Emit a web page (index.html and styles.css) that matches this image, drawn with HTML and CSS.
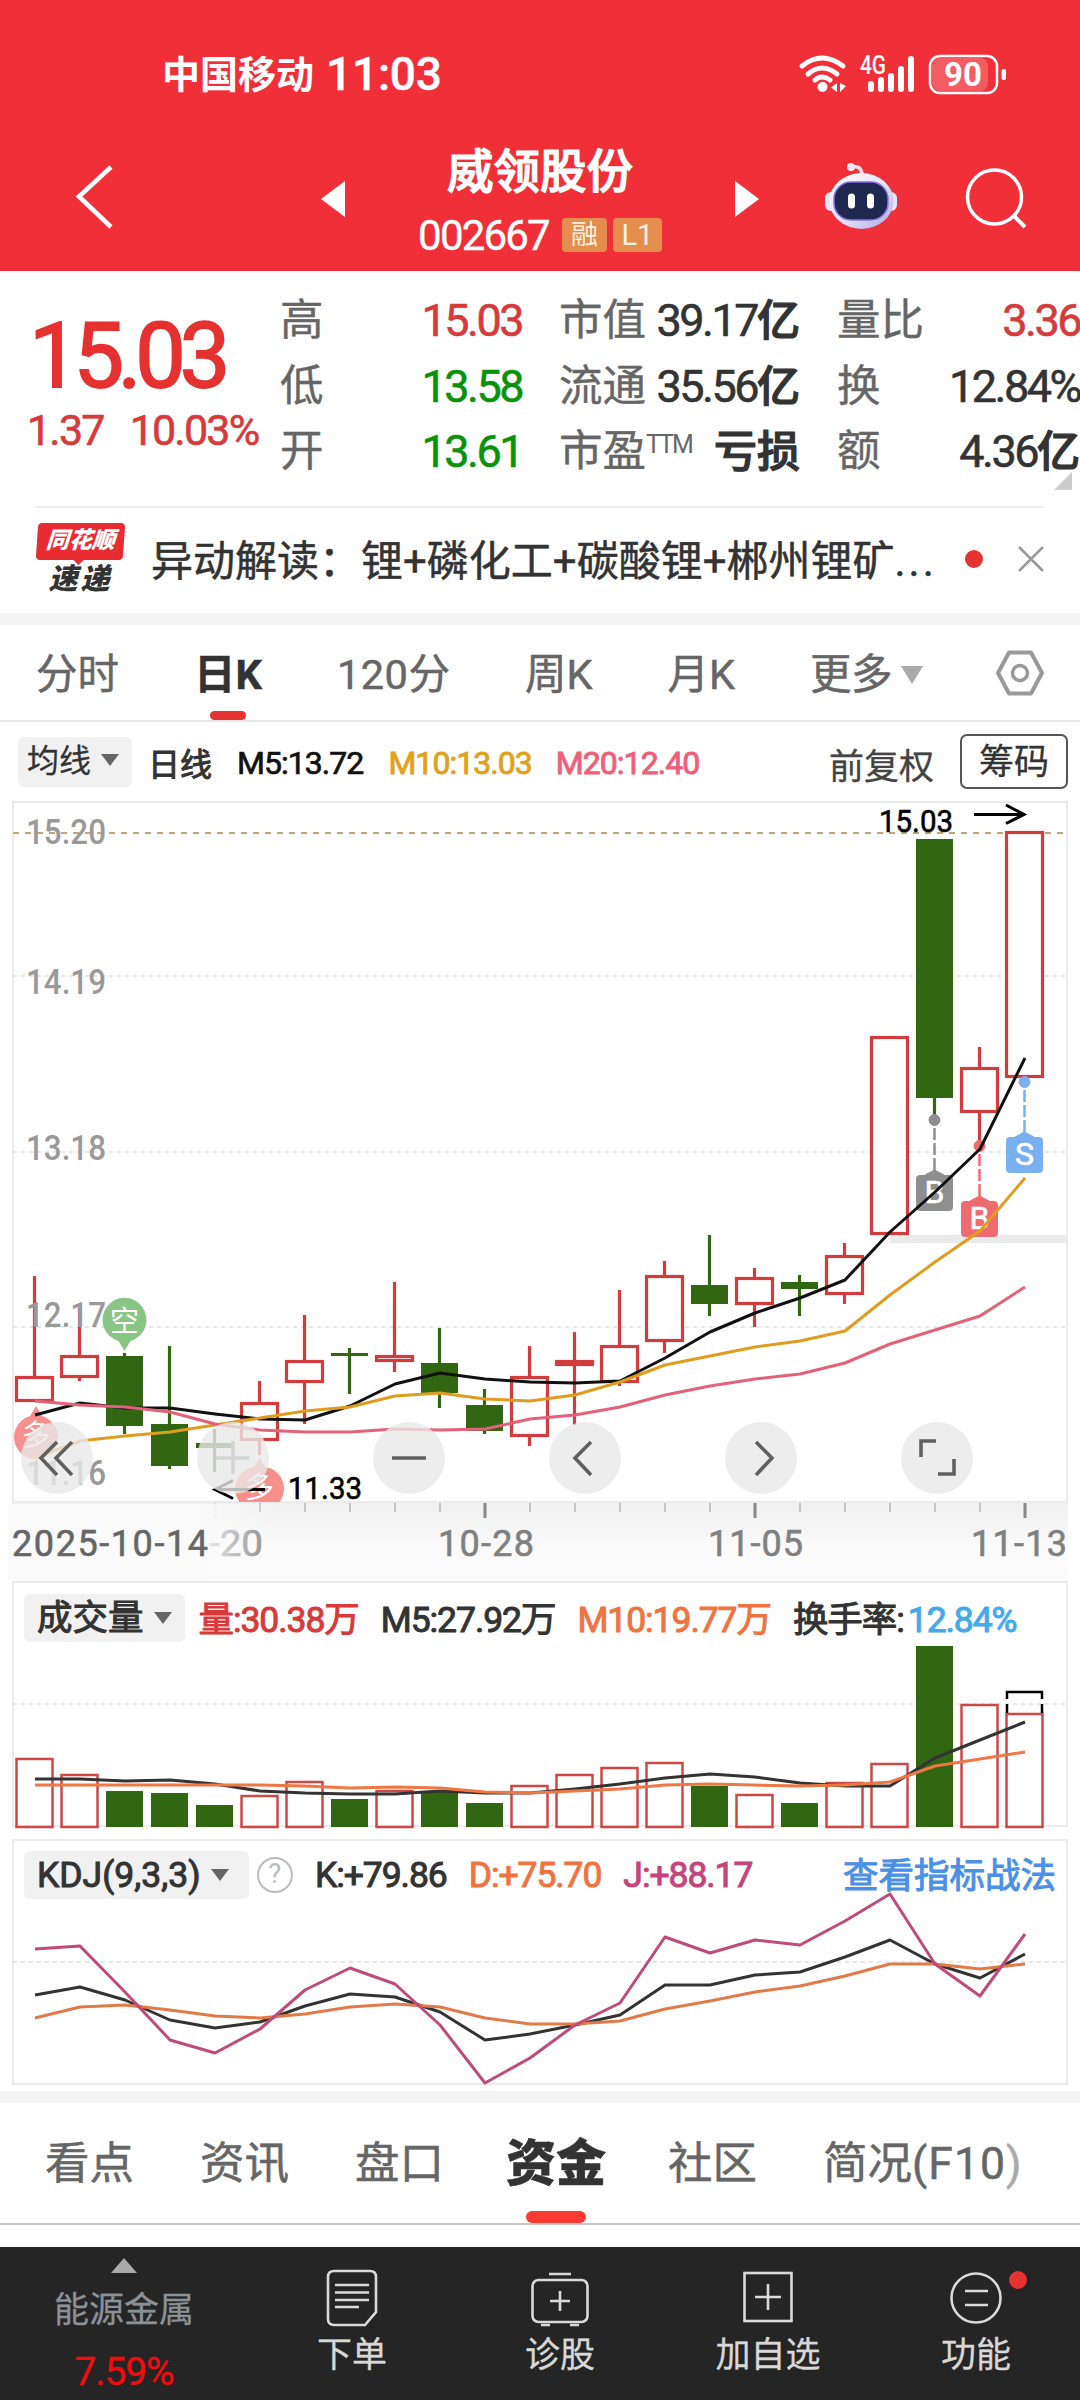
FILE: index.html
```html
<!DOCTYPE html>
<html lang="zh-CN">
<head>
    <meta charset="UTF-8">
    <meta name="viewport" content="width=device-width, initial-scale=1.0">
    <title>威领股份 002667</title>
    <link rel="stylesheet" href="styles.css">
</head>
<body>
    <header class="header">
        <div class="status-bar">
            <span class="carrier">中国移动</span>
            <span class="clock">11:03</span>
            <svg class="status-icons" width="210" height="44" viewBox="797 51 210 44">
                <g fill="none" stroke="#fff" stroke-width="5" stroke-linecap="round">
                    <path d="M802 65Q822 49 843 65"/>
                    <path d="M808 73Q822 61 837 73"/>
                    <path d="M815 79Q822 73 830 79"/>
                </g>
                <circle cx="822.5" cy="86" r="5" fill="#fff"/>
                <path d="M837 82v9l-6-4.500zM840 82v9l6-6z" fill="#fff"/>
                <text class="net-type" x="860" y="73" textLength="26" lengthAdjust="spacingAndGlyphs">4G</text>
                <g stroke="#fff" stroke-width="6" stroke-linecap="round">
                    <path d="M871 83v5M881 79v9M891 75v13M901 68v20M911 58v30"/>
                </g>
                <rect x="932" y="57" width="56" height="33" rx="8" fill="#fff" opacity=".22"/>
                <rect x="930" y="55" width="67" height="37" rx="10" fill="none" stroke="#fff" stroke-width="2.500"/>
                <rect x="1001.500" y="68" width="4.500" height="11" rx="2" fill="#fff"/>
                <text class="battery" x="963" y="85" text-anchor="middle">90</text>
            </svg>
        </div>
        <div class="nav">
            <svg class="back" width="46" height="76" viewBox="72 160 46 76">
                <path d="M111 167L79 196.500L111 227" fill="none" stroke="#fff" stroke-width="4.500"/>
            </svg>
            <svg class="prev" width="24" height="36" viewBox="0 0 24 36"><path d="M24 0v36L0 18z" fill="#fff"/></svg>
            <div class="stock">
                <h1 class="stock-name">威领股份</h1>
                <div class="stock-code">
                    <span class="num">002667</span>
                    <i class="tag">融</i>
                    <i class="tag tag-l1">L1</i>
                </div>
            </div>
            <svg class="next" width="24" height="36" viewBox="0 0 24 36"><path d="M0 0v36L24 18z" fill="#fff"/></svg>
            <svg class="robot" width="74" height="70" viewBox="824 162 74 70">
                <defs>
                    <linearGradient id="shell" x1="0" y1="0" x2="1" y2="1">
                        <stop offset="0" stop-color="#fff"/>
                        <stop offset=".55" stop-color="#e4e2fb"/>
                        <stop offset="1" stop-color="#a9a5de"/>
                    </linearGradient>
                </defs>
                <path d="M852 167q9-2 10 7" fill="none" stroke="#f3dcee" stroke-width="3.500"/>
                <circle cx="851" cy="167" r="4" fill="#f8e6f3"/>
                <rect x="825" y="192" width="72" height="19" rx="6" fill="#e6e4fb"/>
                <ellipse cx="861.500" cy="201" rx="32" ry="28" fill="url(#shell)"/>
                <rect x="834" y="182" width="54" height="38" rx="17" fill="#1f2850" stroke="#8a6fe0" stroke-width="1.500"/>
                <path d="M851.500 197v8M870.500 197v8" stroke="#fff" stroke-width="7" stroke-linecap="round"/>
            </svg>
            <svg class="search" width="64" height="64" viewBox="963 166 64 64">
                <circle cx="994.500" cy="197" r="27" fill="none" stroke="#fff" stroke-width="3.500"/>
                <path d="M1014 216l11 11" stroke="#fff" stroke-width="4"/>
            </svg>
        </div>
    </header>

    <section class="quote">
        <div class="price">
            <div class="price-now">15.03</div>
            <div class="price-change"><span>1.37</span><span>10.03%</span></div>
        </div>
        <dl class="stats">
            <dt>高</dt><dd class="up">15.03</dd>
            <dt>市值</dt><dd>39.17<b>亿</b></dd>
            <dt>量比</dt><dd class="up">3.36</dd>
            <dt>低</dt><dd class="down">13.58</dd>
            <dt>流通</dt><dd>35.56<b>亿</b></dd>
            <dt>换</dt><dd>12.84%</dd>
            <dt>开</dt><dd class="down">13.61</dd>
            <dt>市盈<sup>TTM</sup></dt><dd><b>亏损</b></dd>
            <dt>额</dt><dd>4.36<b>亿</b></dd>
        </dl>
        <i class="corner"></i>
    </section>

    <section class="news">
        <div class="news-logo">
            <span class="logo-top">同花顺</span>
            <span class="logo-bottom">速递</span>
        </div>
        <p class="news-text">异动解读：锂+磷化工+碳酸锂+郴州锂矿<span class="dots">...</span></p>
        <i class="news-dot"></i>
        <svg class="close" width="26" height="26" viewBox="0 0 26 26"><path d="M1 1l24 24M25 1L1 25" stroke="#999" stroke-width="2.500"/></svg>
    </section>

    <nav class="period-tabs">
        <a>分时</a>
        <a class="active">日K</a>
        <a><span class="min">120</span>分</a>
        <a>周K</a>
        <a>月K</a>
        <a class="more">更多<i class="arrow arrow-lg"></i></a>
        <svg width="50" height="46" viewBox="0 0 50 46">
            <path d="M14 2.500h22L47 23L36 43.500H14L3 23z" fill="none" stroke="#999" stroke-width="4" stroke-linejoin="round"/>
            <circle cx="25" cy="23" r="7.500" fill="none" stroke="#999" stroke-width="3.500"/>
        </svg>
    </nav>

    <div class="ma-bar">
        <span class="pill pill-ma">均线<i class="arrow"></i></span>
        <span class="ma-title">日线</span>
        <span class="num ma5">M5:13.72</span>
        <span class="num ma10">M10:13.03</span>
        <span class="num ma20">M20:12.40</span>
        <span class="adjust">前复权</span>
        <span class="chip-btn">筹码</span>
    </div>

    <svg class="k-chart" id="kChart" width="1080" height="780" viewBox="0 801 1080 780">
        <defs>
            <linearGradient id="axisBg" x1="0" y1="0" x2="0" y2="1">
                <stop offset="0" stop-color="#f0f0f0"/>
                <stop offset=".6" stop-color="#fafafa"/>
                <stop offset="1" stop-color="#fbfbfb"/>
            </linearGradient>
            <linearGradient id="axisFade" x1="0" y1="0" x2="1" y2="0">
                <stop offset="0" stop-color="#fafafa"/>
                <stop offset=".62" stop-color="#fafafa"/>
                <stop offset=".9" stop-color="#fafafa" stop-opacity="0"/>
            </linearGradient>
        </defs>
        <rect x="12" y="1503" width="1056" height="78" fill="url(#axisBg)"/>
        <rect x="13" y="802" width="1054" height="700" class="frame"/>
        <path class="grid" d="M13 976H1066M13 1152H1066M13 1327H1066"/>
        <rect x="890" y="1235" width="178" height="8" fill="#eaeaea"/>
        <path class="limit-line" d="M13 833H1066"/>

        <g id="candles"></g>
        <g class="y-label">
            <text x="26" y="844" textLength="80" lengthAdjust="spacingAndGlyphs">15.20</text>
            <text x="26" y="994" textLength="80" lengthAdjust="spacingAndGlyphs">14.19</text>
            <text x="26" y="1160" textLength="80" lengthAdjust="spacingAndGlyphs">13.18</text>
            <text x="26" y="1327" textLength="80" lengthAdjust="spacingAndGlyphs">12.17</text>
            <text x="26" y="1485" textLength="80" lengthAdjust="spacingAndGlyphs">11.16</text>
        </g>

        <!-- 买卖点 -->
        <g class="trade" fill="#8e8e8e" stroke="#8e8e8e">
            <circle cx="934.500" cy="1120" r="5.500"/>
            <path class="trade-line" d="M934.500 1128V1170"/>
            <path d="M925 1175l9.500-5 9.500 5z"/>
            <rect x="916.500" y="1175.500" width="36" height="35" rx="3"/>
            <text x="934.500" y="1203">B</text>
        </g>
        <g class="trade" fill="#ee6c6f" stroke="#ee6c6f">
            <circle cx="979.500" cy="1146" r="5.500"/>
            <path class="trade-line" d="M979.500 1154V1196"/>
            <path d="M970 1201l9.500-5 9.500 5z"/>
            <rect x="961.500" y="1201.500" width="36" height="35" rx="3"/>
            <text x="979.500" y="1229">B</text>
        </g>
        <g class="trade" fill="#7aaff0" stroke="#7aaff0">
            <circle cx="1024.500" cy="1082" r="5.500"/>
            <path class="trade-line" d="M1024.500 1090V1132"/>
            <path d="M1015 1137l9.500-5 9.500 5z"/>
            <rect x="1006.500" y="1137.500" width="36" height="35" rx="3"/>
            <text x="1024.500" y="1165">S</text>
        </g>

        <!-- 多空信号 -->
        <g class="signal">
            <path fill="#89c683" d="M124.500 1351l-6-10a22 22 0 1 1 12 0z"/>
            <text x="124.500" y="1332">空</text>
            <path fill="#f78f8d" d="M36 1406l6 10a22 22 0 1 1-12 0z"/>
            <text x="36" y="1446">多</text>
            <path fill="#f78f8d" d="M259.500 1458l6 9a22 22 0 0 1 14 35h-40a22 22 0 0 1 14-35z"/>
            <text x="259.500" y="1498">多</text>
        </g>

        <g id="maLines"></g>

        <text class="mark" x="879" y="832" textLength="74" lengthAdjust="spacingAndGlyphs">15.03</text>
        <path class="mark-arrow" d="M974 814.500h49M1006 805l18 9.500-18 9"/>
        <text class="mark" x="288" y="1499" textLength="74" lengthAdjust="spacingAndGlyphs">11.33</text>
        <path class="mark-arrow" d="M265 1489.500h-49M233 1480.500l-18 9 18 9"/>

        <g id="ticks"></g>
        <g class="x-label">
            <text x="209" y="1556" textLength="54" lengthAdjust="spacingAndGlyphs">-20</text>
            <rect x="8" y="1504" width="300" height="76" fill="url(#axisFade)"/>
            <text x="12" y="1556" class="x-first" textLength="196" lengthAdjust="spacing">2025-10-14</text>
            <text x="438" y="1556" textLength="96" lengthAdjust="spacing">10-28</text>
            <text x="708" y="1556" textLength="95" lengthAdjust="spacing">11-05</text>
            <text x="971" y="1556" textLength="96" lengthAdjust="spacing">11-13</text>
        </g>

        <g class="ctrl">
            <circle cx="57" cy="1458" r="36"/>
            <circle cx="233" cy="1458" r="36"/>
            <circle cx="409" cy="1458" r="36"/>
            <circle cx="585" cy="1458" r="36"/>
            <circle cx="761" cy="1458" r="36"/>
            <circle cx="937" cy="1458" r="36"/>
            <path d="M57 1442l-16 16 16 17M72 1442l-16 16 16 17"/>
            <path class="disabled" d="M216 1458h33M233 1441v33"/>
            <path d="M392 1458h34"/>
            <path d="M591 1442l-16 16 16 17"/>
            <path d="M756 1442l16 16-16 17"/>
            <path d="M921 1457v-16h15M938 1474h16v-15"/>
        </g>
    </svg>

    <section class="panel">
        <svg class="panel-chart" id="volChart" width="1080" height="252" viewBox="0 1581 1080 252">
            <rect x="13" y="1582" width="1054" height="244" class="frame"/>
            <path class="grid" d="M13 1704H1066"/>
        </svg>
        <div class="panel-head">
            <span class="pill">成交量<i class="arrow"></i></span>
            <span class="num vol-red">量:30.38万</span>
            <span class="num">M5:27.92万</span>
            <span class="num vol-orange">M10:19.77万</span>
            <span class="num turnover">换手率:<em>12.84%</em></span>
        </div>
    </section>

    <section class="panel">
        <svg class="panel-chart" id="kdjChart" width="1080" height="252" viewBox="0 1839 1080 252">
            <rect x="13" y="1840" width="1054" height="244" class="frame"/>
            <path class="grid" d="M13 1962H1066"/>
        </svg>
        <div class="panel-head kdj-head">
            <span class="pill pill-kdj">KDJ(9,3,3)<i class="arrow"></i></span>
            <span class="help">?</span>
            <span class="num">K:+79.86</span>
            <span class="num vol-orange">D:+75.70</span>
            <span class="num kdj-j">J:+88.17</span>
            <a class="kdj-link">查看指标战法</a>
        </div>
    </section>

    <nav class="info-tabs">
        <a>看点</a>
        <a>资讯</a>
        <a>盘口</a>
        <a class="active">资金</a>
        <a>社区</a>
        <a>简况<span class="f10">(F10<span>)</span></span></a>
    </nav>

    <footer class="footer">
        <div class="sector">
            <i class="arrow-up"></i>
            <span class="sector-name">能源金属</span>
            <span class="num sector-rate">7.59%</span>
        </div>
        <div class="tool">
            <svg width="60" height="60" viewBox="0 0 60 60"><path d="M12 4h36q6 0 6 6v35l-11 13H12q-6 0-6-6V10q0-6 6-6z"/><path d="M13 18h34M13 25.500h34M13 33h34M13 40h24"/></svg>
            <span>下单</span>
        </div>
        <div class="tool">
            <svg width="60" height="60" viewBox="0 0 60 60"><rect x="2.500" y="13" width="55" height="42" rx="6"/><path d="M19 7h22M11 58h9M40 58h9M20 34h20M30 24v20"/></svg>
            <span>诊股</span>
        </div>
        <div class="tool">
            <svg width="60" height="60" viewBox="0 0 60 60"><rect x="6.500" y="6" width="47" height="48"/><path d="M17 30h26M30 17v26"/></svg>
            <span>加自选</span>
        </div>
        <div class="tool">
            <svg width="60" height="60" viewBox="0 0 60 60"><circle cx="30" cy="31" r="24.500"/><path d="M19 24h23M19 38h23"/></svg>
            <span>功能</span>
            <i class="badge"></i>
        </div>
    </footer>

    <script src="chart.js"></script>
</body>
</html>
```
FILE: styles.css
```css
* {
    margin: 0;
    padding: 0;
    box-sizing: border-box;
}

body {
    width: 1080px;
    height: 2400px;
    font-family: Roboto, "Noto Sans CJK SC", sans-serif;
    background: #fff;
    color: #333;
    overflow: hidden;
}

i, em {
    font-style: normal;
}

svg {
    display: block;
    flex-shrink: 0;
}

.num {
    letter-spacing: -0.03em;
}

/* 顶部 */
.header {
    height: 271px;
    background: #f12f38;
    color: #fff;
}

.status-bar {
    display: flex;
    align-items: center;
    height: 148px;
    padding: 0 73px 0 162px;
}

.carrier {
    margin-top: -5px;
    margin-right: 12px;
    font-size: 38px;
    font-weight: 700;
}

.clock {
    font-size: 46px;
    font-weight: 500;
    letter-spacing: -0.2px;
    -webkit-text-stroke: 0.4px;
}

.status-icons {
    margin-left: auto;
    overflow: visible;
}

.net-type {
    font-size: 25px;
    font-weight: 500;
    fill: #fff;
}

.battery {
    font-size: 33px;
    font-weight: 700;
    fill: #fff;
}

.nav {
    display: flex;
    align-items: flex-start;
    height: 123px;
    padding-left: 72px;
}

.back {
    margin-top: 12px;
}

.prev {
    margin: 33px 0 0 203px;
}

.stock {
    width: 390px;
    text-align: center;
    margin-top: -6px;
}

.stock-name {
    font-size: 46.5px;
    font-weight: 500;
    line-height: 60px;
    -webkit-text-stroke: 1.2px;
}

.stock-code {
    display: flex;
    align-items: center;
    justify-content: center;
    height: 34px;
    margin-top: 16px;
    font-size: 42px;
}

.stock-code .num {
    letter-spacing: -1.8px;
    margin-right: 13px;
    -webkit-text-stroke: 0.4px;
}

.tag {
    width: 45px;
    height: 34px;
    line-height: 34px;
    font-size: 27px;
    background: #e48d4c;
    color: #fff1e2;
    border-radius: 4px;
}

.tag-l1 {
    width: 49px;
    margin-left: 6px;
    font-size: 29px;
}

.next {
    margin-top: 33px;
}

.robot {
    margin: 14px 0 0 65px;
}

.search {
    margin: 18px 0 0 65px;
}

/* 行情 */
.quote {
    position: relative;
    display: flex;
    height: 235px;
    padding-top: 17px;
}

.price {
    width: 280px;
    color: #e53130;
}

.price-now {
    padding: 17px 0 0 29px;
    font-size: 90px;
    line-height: 104px;
    letter-spacing: -6.2px;
    -webkit-text-stroke: 1.8px;
}

.price-change {
    display: flex;
    gap: 26px;
    padding-left: 27px;
    margin-top: -3px;
    font-size: 43px;
    line-height: 48px;
    letter-spacing: -1.8px;
    color: #d63a3a;
    -webkit-text-stroke: 0.6px;
}

.stats {
    display: grid;
    grid-template-columns: 80px 162px 130px 148px 120px 160px;
    grid-auto-rows: 65.5px;
    width: 800px;
    line-height: 65.5px;
}

.stats dt {
    font-size: 43.5px;
    color: #666;
    white-space: nowrap;
    -webkit-text-stroke: 0.4px;
}

.stats dt:nth-of-type(3n+2),
.stats dt:nth-of-type(3n) {
    padding-left: 37px;
}

.stats dd {
    font-size: 45px;
    letter-spacing: -2.5px;
    color: #333;
    white-space: nowrap;
    justify-self: end;
    -webkit-text-stroke: 0.6px;
}

.stats .up {
    color: #d63a3a;
}

.stats .down {
    color: #0a920a;
}

.stats b {
    font-size: 43px;
    font-weight: 500;
    letter-spacing: 0;
    -webkit-text-stroke: 1.2px;
}

.stats sup {
    font-size: 25px;
    line-height: 0;
    vertical-align: 13px;
    letter-spacing: -2px;
    -webkit-text-stroke: 0;
}

.corner {
    position: absolute;
    right: 8px;
    bottom: 16px;
    border-left: 18px solid transparent;
    border-bottom: 18px solid #ccc;
}

/* 异动 */
.news {
    display: flex;
    align-items: center;
    height: 107px;
    margin: 0 36px;
    border-top: 2px solid #eee;
}

.news-logo {
    display: flex;
    flex-direction: column;
    align-items: center;
    width: 89px;
    margin-right: 26px;
    font-style: italic;
    font-weight: 900;
}

.logo-top {
    position: relative;
    width: 87px;
    height: 37px;
    line-height: 36px;
    text-align: center;
    font-size: 23px;
    color: #fff;
    background: #e82c31;
    border-radius: 4px;
    transform: skewX(-4deg);
}

.logo-top::after {
    content: '';
    position: absolute;
    left: 37px;
    top: 36px;
    border: 6px solid transparent;
    border-top-color: #e82c31;
}

.logo-bottom {
    font-size: 29px;
    line-height: 38px;
    letter-spacing: 3px;
}

.news-text {
    margin-top: -7px;
    font-size: 42px;
    white-space: nowrap;
    -webkit-text-stroke: 0.5px;
}

.dots {
    letter-spacing: 3px;
}

.news-dot {
    width: 18px;
    height: 18px;
    margin: -3px 0 0 auto;
    border-radius: 50%;
    background: #e73232;
}

.close {
    margin: -3px 0 0 35px;
}

/* 周期 */
.period-tabs {
    display: flex;
    align-items: center;
    height: 109px;
    padding: 0 35px 0 36px;
    gap: 75px;
    border-top: 12px solid #f4f4f4;
    border-bottom: 2px solid #e8e8e8;
    font-size: 41.5px;
    color: #666;
    -webkit-text-stroke: 0.5px;
}

.period-tabs a {
    position: relative;
    line-height: 99px;
    height: 95px;
    white-space: nowrap;
}

.period-tabs svg {
    margin-left: auto;
}

.min {
    letter-spacing: 0.5px;
}

.period-tabs .more {
    letter-spacing: -0.5px;
    margin-right: -20px;
}

.period-tabs .active {
    color: #333;
    font-weight: 700;
}

.period-tabs .active::after {
    content: '';
    position: absolute;
    left: 50%;
    bottom: 0;
    width: 36px;
    height: 9px;
    margin-left: -18px;
    border-radius: 5px;
    background: #e73232;
}

.arrow {
    display: inline-block;
    margin-left: 10px;
    vertical-align: 6px;
    border: 9px solid transparent;
    border-top: 12px solid #666;
    border-bottom: 0;
}

.arrow-lg {
    border-width: 18px 11px 0;
    border-top-color: #aaa;
    margin-left: 9px;
    vertical-align: 5px;
}

/* 均线 */
.ma-bar {
    display: flex;
    align-items: center;
    height: 79px;
    padding: 0 12px 0 18px;
    font-size: 32px;
    -webkit-text-stroke: 0.3px;
}

.pill {
    height: 48px;
    line-height: 46px;
    padding: 0 13px;
    background: #f1f1f1;
    border-radius: 6px;
    white-space: nowrap;
}

.pill-ma {
    width: 114px;
    height: 50px;
    padding: 0 0 0 9px;
    line-height: 48px;
}

.ma-title {
    margin: 1px 0 0 16px;
    -webkit-text-stroke: 1px;
}

.ma-bar .num {
    margin: 3px 0 0 25px;
}

.ma-bar .ma5 {
    color: #111;
    -webkit-text-stroke: 0.7px;
}

.ma-bar .ma10 {
    color: #e2a01b;
    -webkit-text-stroke: 0.9px;
}

.ma-bar .ma20 {
    margin-left: 24px;
    color: #ee6079;
    -webkit-text-stroke: 0.9px;
}

.adjust {
    margin: 3px 26px 0 auto;
    font-size: 35px;
    color: #444;
}

.chip-btn {
    width: 108px;
    height: 55px;
    line-height: 53px;
    text-align: center;
    font-size: 35px;
    border: 2px solid #555;
    border-radius: 7px;
}

/* 图表 */
.frame {
    fill: none;
    stroke: #ebebeb;
    stroke-width: 2;
}

.grid {
    fill: none;
    stroke: #dedede;
    stroke-width: 1.5;
    stroke-dasharray: 4 4;
}

.limit-line {
    stroke: #c1a577;
    stroke-width: 2;
    stroke-dasharray: 6 6;
}

.red-bar {
    fill: #fff;
    stroke: #d23c3c;
    stroke-width: 3.2;
}

.red-vol {
    fill: none;
    stroke: #cc4848;
    stroke-width: 2.5;
}

.green-bar {
    fill: #316613;
}

.wick {
    stroke-width: 3.2;
}

.line {
    fill: none;
    stroke-width: 3;
    stroke-linejoin: round;
}

.y-label {
    font-size: 35px;
    font-weight: 500;
    fill: #999;
}

.x-label {
    font-size: 36px;
    fill: #808080;
    stroke: #808080;
    stroke-width: 0.6;
}

.x-label rect {
    stroke: none;
}

.x-label .x-first {
    fill: #666;
    stroke: #666;
}

.mark {
    font-size: 31px;
    fill: #000;
    stroke: #000;
    stroke-width: 0.6;
}

.mark-arrow {
    fill: none;
    stroke: #000;
    stroke-width: 3;
}

.trade path,
.trade rect {
    stroke-width: 1;
}

.trade .trade-line {
    stroke-width: 2.5;
    stroke-dasharray: 12 3;
}

.trade text {
    font-size: 32px;
    text-anchor: middle;
    fill: #fff;
    stroke: #fff;
    stroke-width: 0.6;
}

.signal text {
    font-size: 29px;
    text-anchor: middle;
    fill: #fff;
}

.ctrl circle {
    fill: #e8e8e8;
    fill-opacity: .8;
}

.ctrl path {
    fill: none;
    stroke: #606060;
    stroke-width: 3.6;
}

.ctrl .disabled {
    stroke: #d4d4d4;
}

/* 指标 */
.panel {
    position: relative;
    height: 258px;
}

.panel + .panel {
    height: 252px;
}

.panel-chart {
    position: absolute;
    left: 0;
    top: 0;
}

.panel-head {
    position: relative;
    display: flex;
    align-items: center;
    padding: 12px 24px 0;
    font-size: 35.5px;
    white-space: nowrap;
    -webkit-text-stroke: 1px;
}

.panel-head .pill {
    line-height: 49px;
}

.panel-head .num {
    margin: -2px 0 0 22px;
}

.panel-head .vol-red {
    margin-left: 14px;
    color: #d83a3a;
}

.panel-head .vol-orange {
    color: #f0733f;
}

.turnover em {
    margin-left: 4px;
    color: #43a9ea;
}

.pill-kdj {
    width: 225px;
}

.kdj-head .help {
    width: 36px;
    height: 36px;
    line-height: 31px;
    margin-left: 8px;
    text-align: center;
    font-size: 27px;
    color: #bbb;
    border: 2.5px solid #bbb;
    border-radius: 50%;
    -webkit-text-stroke: 0;
}

.panel-head .kdj-j {
    color: #c5447c;
}

.kdj-head .num {
    margin-top: 0;
}

.kdj-link {
    margin: -5px 0 0 auto;
    color: #4a90e6;
}

/* 资料 */
.info-tabs {
    display: flex;
    align-items: center;
    gap: 66px;
    height: 134px;
    padding-left: 45px;
    border-top: 12px solid #f4f4f4;
    border-bottom: 2px solid #c8c8c8;
    font-size: 44.5px;
    color: #666;
    white-space: nowrap;
    -webkit-text-stroke: 0.5px;
}

.info-tabs a {
    position: relative;
    height: 120px;
    line-height: 122px;
}

.info-tabs .active {
    margin: 0 -4px;
    font-size: 50px;
    font-weight: 900;
    color: #333;
}

.info-tabs .active::after {
    content: '';
    position: absolute;
    left: 50%;
    bottom: 0;
    width: 60px;
    height: 12px;
    margin-left: -30px;
    border-radius: 6px;
    background: #fb3b32;
}

.f10 {
    letter-spacing: 1px;
}

.f10 span {
    color: #aaa;
}

/* 底部 */
.footer {
    display: grid;
    grid-template-columns: 248px repeat(4, 208px);
    height: 153px;
    margin-top: 22px;
    background: #252525;
    color: #d8d8d8;
    font-size: 35px;
    -webkit-text-stroke: 0.3px;
}

.sector {
    display: flex;
    flex-direction: column;
    align-items: center;
}

.arrow-up {
    margin-top: 11px;
    border: 13px solid transparent;
    border-top: 0;
    border-bottom: 15px solid #aaa;
}

.sector-name {
    margin-top: 13px;
    line-height: 50px;
    color: #8a9197;
}

.sector-rate {
    margin-top: 12px;
    line-height: 48px;
    font-size: 39px;
    color: #f10d0d;
}

.tool {
    position: relative;
    display: flex;
    flex-direction: column;
    align-items: center;
    padding-top: 20px;
}

.tool svg {
    fill: none;
    stroke: #dadada;
    stroke-width: 2.6;
}

.tool span {
    margin-top: 4px;
    line-height: 50px;
}

.badge {
    position: absolute;
    left: 137px;
    top: 24px;
    width: 18px;
    height: 18px;
    border-radius: 50%;
    background: #e73232;
}
```
FILE: chart.js
```js
const NS = 'http://www.w3.org/2000/svg';
const START_X = 34.5;
const STEP = 45;
const BAR_W = 37;

// [涨跌, 最高, 实体上沿, 实体下沿, 最低, 成交量上沿]
const bars = [
    [1, 1276, 1376, 1402, 1402, 1758], [1, 1308, 1355, 1378, 1381, 1774],
    [0, 1353, 1356, 1426, 1434, 1791], [0, 1346, 1424, 1466, 1469, 1793],
    [0, 1429, 1443, 1448, 1472, 1805], [1, 1381, 1402, 1441, 1455, 1795],
    [1, 1315, 1360, 1383, 1424, 1781], [0, 1348, 1353, 1356, 1394, 1799],
    [1, 1282, 1355, 1362, 1372, 1790], [0, 1328, 1363, 1393, 1408, 1791],
    [0, 1389, 1405, 1431, 1434, 1803], [1, 1346, 1376, 1437, 1446, 1785],
    [1, 1332, 1360, 1366, 1425, 1774], [1, 1290, 1345, 1383, 1386, 1767],
    [1, 1261, 1275, 1342, 1353, 1762], [0, 1235, 1285, 1304, 1316, 1786],
    [1, 1268, 1277, 1305, 1327, 1794], [0, 1275, 1282, 1289, 1316, 1803],
    [1, 1243, 1255, 1295, 1304, 1782], [1, 1036, 1036, 1235, 1235, 1763],
    [0, 839, 839, 1098, 1120, 1646], [1, 1047, 1067, 1113, 1146, 1704],
    [1, 831, 831, 1078, 1082, 1713]
];

const ma5 = [1415, 1403, 1408, 1408, 1414, 1419, 1420, 1406, 1384, 1373, 1379, 1382, 1383, 1381, 1358, 1332, 1313, 1298, 1280, 1232, 1192, 1149, 1058];
const ma10 = [1458, 1441, 1436, 1432, 1425, 1418, 1411, 1407, 1396, 1393, 1399, 1401, 1395, 1382, 1365, 1356, 1347, 1341, 1331, 1295, 1262, 1231, 1178];
const ma20 = [1401, 1405, 1407, 1412, 1424, 1430, 1432, 1432, 1429, 1430, 1429, 1419, 1415, 1407, 1395, 1386, 1379, 1374, 1363, 1344, 1330, 1316, 1287];
const vol5 = [1779, 1779, 1781, 1780, 1784, 1791, 1793, 1794, 1794, 1791, 1793, 1793, 1789, 1784, 1778, 1774, 1777, 1783, 1786, 1786, 1758, 1740, 1722];
const vol10 = [1785, 1785, 1785, 1785, 1785, 1785, 1786, 1788, 1787, 1788, 1792, 1793, 1791, 1789, 1785, 1784, 1785, 1786, 1785, 1782, 1766, 1759, 1752];
const kLine = [1995, 1987, 2000, 2020, 2028, 2022, 2006, 1994, 1997, 2012, 2040, 2034, 2025, 2015, 1985, 1985, 1975, 1972, 1957, 1940, 1964, 1978, 1954];
const dLine = [2018, 2007, 2005, 2010, 2016, 2018, 2014, 2007, 2004, 2007, 2018, 2024, 2024, 2021, 2009, 2001, 1992, 1986, 1976, 1964, 1964, 1969, 1964];
const jLine = [1949, 1946, 1992, 2040, 2053, 2029, 1990, 1968, 1984, 2025, 2083, 2058, 2025, 2003, 1937, 1953, 1940, 1945, 1921, 1894, 1964, 1996, 1934];

function add(parent, tag, attrs) {
    const el = document.createElementNS(NS, tag);
    for (const key in attrs) {
        el.setAttribute(key, attrs[key]);
    }
    parent.appendChild(el);
}

function drawLine(parent, values, color) {
    const points = values.map((y, i) => `${START_X + i * STEP + 0.5},${y}`).join(' ');
    add(parent, 'polyline', { points, stroke: color, class: 'line' });
}

const candles = document.getElementById('candles');
const ticks = document.getElementById('ticks');
const vol = document.getElementById('volChart');
const kdj = document.getElementById('kdjChart');

bars.forEach(([up, high, top, bottom, low, volTop], i) => {
    const x = START_X + i * STEP;
    const left = x - BAR_W / 2;
    const color = up ? '#d23c3c' : '#316613';

    add(candles, 'path', { d: `M${x} ${high}V${low}`, stroke: color, class: 'wick' });
    if (up) {
        add(candles, 'rect', { x: left + 0.5, y: top + 1.5, width: BAR_W - 1, height: bottom - top - 3, class: 'red-bar' });
        add(vol, 'rect', { x: left + 0.5, y: volTop + 1, width: BAR_W - 1, height: 1826 - volTop, class: 'red-vol' });
    } else {
        add(candles, 'rect', { x: left, y: top, width: BAR_W, height: bottom - top, class: 'green-bar' });
        add(vol, 'rect', { x: left, y: volTop, width: BAR_W, height: 1827 - volTop, class: 'green-bar' });
    }

    if (i >= 4) {
        const major = [4, 10, 16, 22].includes(i);
        add(ticks, 'path', {
            d: `M${x + 0.5} 1503v${major ? 15 : 9}`,
            stroke: i === 4 ? '#ddd' : major ? '#888' : '#c4c4c4',
            'stroke-width': major ? 3 : 2
        });
    }
});

const maLines = document.getElementById('maLines');
drawLine(maLines, ma5, '#111');
drawLine(maLines, ma10, '#df9d20');
drawLine(maLines, ma20, '#e2627a');

// 预测成交量
add(vol, 'path', { d: 'M1007 1713V1692H1042V1713', fill: 'none', stroke: '#000', 'stroke-width': 2.5, 'stroke-dasharray': '9 5 49 5 9' });
drawLine(vol, vol5, '#333');
drawLine(vol, vol10, '#ef7743');

drawLine(kdj, kLine, '#333');
drawLine(kdj, dLine, '#e07a48');
drawLine(kdj, jLine, '#bf4a7c');
```
